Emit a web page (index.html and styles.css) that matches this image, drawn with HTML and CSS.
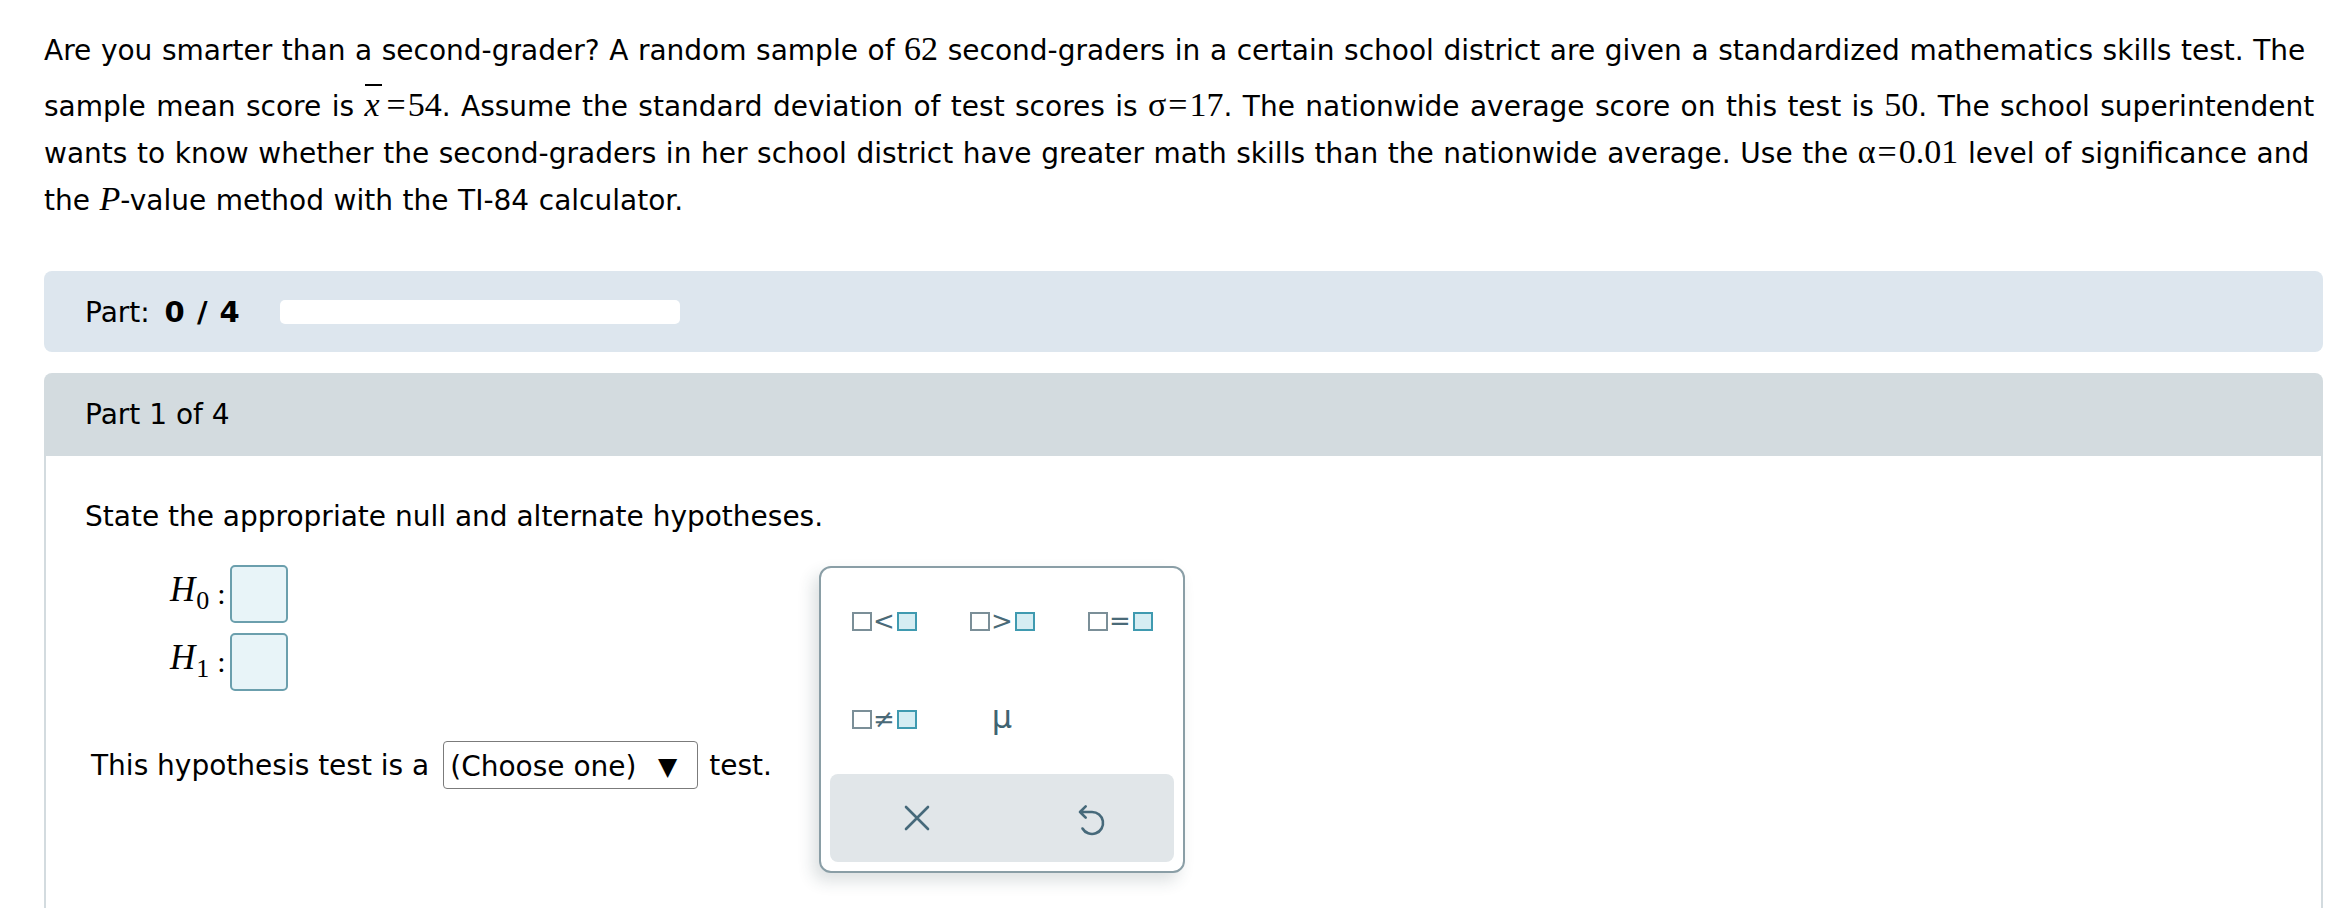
FILE: index.html
```html
<!DOCTYPE html>
<html lang="en">
<head>
<meta charset="utf-8">
<title>Hypothesis test</title>
<link rel="stylesheet" href="styles.css">
</head>
<body>
<div class="page">
  <div class="question">
    <span class="q-line">Are you smarter than a second-grader? A random sample of <span class="mn">62</span> second-graders in a certain school district are given a standardized mathematics skills test. The</span>
    <span class="q-line tall">sample mean score is <span class="mi xbar">x</span><span class="mo">=</span><span class="mn">54</span>. Assume the standard deviation of test scores is <span class="mg">σ</span><span class="mo">=</span><span class="mn">17</span>. The nationwide average score on this test is <span class="mn">50</span>. The school superintendent</span>
    <span class="q-line">wants to know whether the second-graders in her school district have greater math skills than the nationwide average. Use the <span class="mg">α</span><span class="mo">=</span><span class="mn">0.01</span> level of significance and</span>
    <span class="q-line">the <span class="mi">P</span>-value method with the TI-84 calculator.</span>
  </div>

  <div class="partbar">
    <span class="part-label">Part: <b>0 / 4</b></span>
    <div class="progress"></div>
  </div>

  <div class="card">
    <div class="card-head">Part 1 of 4</div>
    <div class="card-body">
      <p class="prompt">State the appropriate null and alternate hypotheses.</p>
      <div class="answer-row">
        <div class="left-col">
          <div class="hyps">
            <div class="hyp">
              <span class="hlabel"><span class="mi">H</span><sub>0</sub></span><span class="colon">:</span><span class="hbox"></span>
            </div>
            <div class="hyp">
              <span class="hlabel"><span class="mi">H</span><sub>1</sub></span><span class="colon">:</span><span class="hbox"></span>
            </div>
          </div>
          <div class="test-line">
            <span>This hypothesis test is a</span>
            <span class="select"><span>(Choose one)</span><span class="caret">▼</span></span>
            <span>test.</span>
          </div>
        </div>

        <div class="palette">
          <div class="pal-grid">
            <div class="pal-item"><span class="sq"></span><span class="op">&lt;</span><span class="sq blue"></span></div>
            <div class="pal-item"><span class="sq"></span><span class="op">&gt;</span><span class="sq blue"></span></div>
            <div class="pal-item"><span class="sq"></span><span class="op">=</span><span class="sq blue"></span></div>
            <div class="pal-item"><span class="sq"></span><span class="op">≠</span><span class="sq blue"></span></div>
            <div class="pal-item mu">μ</div>
            <div class="pal-item"></div>
          </div>
          <div class="pal-actions">
            <div class="pal-btn clear">
              <svg width="26" height="26" viewBox="0 0 26 26"><path d="M2 2 L24 24 M24 2 L2 24" fill="none" stroke="#46697a" stroke-width="2.6" stroke-linecap="round"/></svg>
            </div>
            <div class="pal-btn reset">
              <svg width="42" height="42" viewBox="0 0 42 42"><path d="M16.7 9.3 L11 15 L16.7 20.7 M11 15 H23 A11 11 0 1 1 13.5 31.5" fill="none" stroke="#46697a" stroke-width="2.6" stroke-linecap="round" stroke-linejoin="round"/></svg>
            </div>
          </div>
        </div>
      </div>
    </div>
  </div>
</div>
</body>
</html>
```

FILE: styles.css
```css
html, body {
  margin: 0;
  padding: 0;
  background: #ffffff;
}

body {
  font-family: "DejaVu Sans", Verdana, sans-serif;
  font-size: 28px;
  color: #000;
}

.page {
  padding: 27px 21px 0 44px;
}

.question {
  line-height: 47px;
  word-spacing: 0.7px;
}

.q-line {
  display: block;
  white-space: nowrap;
}

.q-line.tall {
  padding-top: 9px;
  word-spacing: 1.5px;
}

.mn, .mo, .mi, .mg {
  font-family: "Liberation Serif", "Times New Roman", serif;
  font-size: 34px;
  line-height: 1;
  word-spacing: 0;
}

.mi {
  font-style: italic;
}

.mo {
  padding: 0 2px;
}

.xbar {
  position: relative;
  padding-right: 5px;
}

.xbar::before {
  content: "";
  position: absolute;
  left: 1px;
  right: 3px;
  top: -2px;
  height: 2px;
  background: #000;
}

/* progress bar */
.partbar {
  margin-top: 47px;
  height: 81px;
  background: #dde6ee;
  border-radius: 8px;
  display: flex;
  align-items: center;
  padding-left: 41px;
}

.part-label {
  word-spacing: 6px;
}

.part-label b {
  font-weight: bold;
  font-size: 29px;
  word-spacing: 2px;
}

.progress {
  width: 400px;
  height: 24px;
  background: #fff;
  border-radius: 5px;
  margin-left: 40px;
}

/* card */
.card {
  margin-top: 21px;
}

.card-head {
  height: 83px;
  background: #d3dbdf;
  border-radius: 8px 8px 0 0;
  display: flex;
  align-items: center;
  padding-left: 41px;
}

.card-body {
  border: 2px solid #d3dbdf;
  border-top: none;
  padding: 37px 39px 0 39px;
  min-height: 420px;
}

.prompt {
  margin: 0;
  line-height: 47px;
}

.answer-row {
  display: flex;
  align-items: flex-start;
  margin-top: 25px;
}

.left-col {
  width: 734px;
}

.hyps {
  padding-left: 85px;
}

.hyp {
  display: flex;
  align-items: center;
  height: 58px;
  margin-bottom: 10px;
}

.hlabel .mi {
  font-size: 35px;
}

.hlabel sub {
  font-family: "Liberation Serif", "Times New Roman", serif;
  font-size: 26px;
  vertical-align: -8px;
  margin-left: 1px;
}

.colon {
  font-family: "Liberation Serif", serif;
  font-size: 30px;
  margin: 0 4px 0 8px;
}

.hbox {
  width: 54px;
  height: 54px;
  border: 2px solid #6b9fad;
  border-radius: 5px;
  background: #e8f4f8;
}

.test-line {
  display: flex;
  align-items: center;
  height: 48px;
  margin-top: 50px;
  padding-left: 6px;
  white-space: nowrap;
}

.select {
  display: inline-flex;
  align-items: center;
  justify-content: space-between;
  box-sizing: border-box;
  width: 255px;
  height: 48px;
  margin: 0 11px 0 14px;
  padding: 2px 20px 0 6px;
  border: 1.5px solid #7b7b7b;
  border-radius: 4px;
  font-size: 28px;
}

.caret {
  font-size: 25px;
}

/* palette */
.palette {
  box-sizing: border-box;
  width: 366px;
  height: 307px;
  margin-top: 1px;
  border: 2px solid #8a9ea6;
  border-radius: 12px;
  background: #fff;
  padding: 4px 9px 9px 9px;
  box-shadow: -6px 8px 16px rgba(40, 60, 70, 0.16);
  display: flex;
  flex-direction: column;
}

.pal-grid {
  display: grid;
  grid-template-columns: repeat(3, 118px);
  grid-auto-rows: 98px;
  justify-content: center;
  align-items: center;
  justify-items: center;
  flex: 1;
  margin-bottom: 4px;
}

.pal-item {
  display: flex;
  align-items: center;
  color: #4a6a78;
}

.sq {
  width: 16px;
  height: 15px;
  border: 2.5px solid #7b8f98;
  background: #fff;
}

.sq.blue {
  border-color: #3f9ab0;
  background: #d5edf3;
}

.op {
  font-size: 26px;
  line-height: 1;
  width: 25px;
  text-align: center;
  color: #4a6a78;
}

.mu {
  font-size: 32px;
  color: #3f6472;
  padding-bottom: 4px;
}

.pal-actions {
  height: 88px;
  background: #e1e6e9;
  border-radius: 8px;
  display: flex;
}

.pal-btn {
  flex: 1;
  display: flex;
  align-items: center;
  justify-content: center;
}

.pal-btn.clear {
  padding-left: 3px;
}

.pal-btn.reset {
  padding-left: 4px;
}
```
